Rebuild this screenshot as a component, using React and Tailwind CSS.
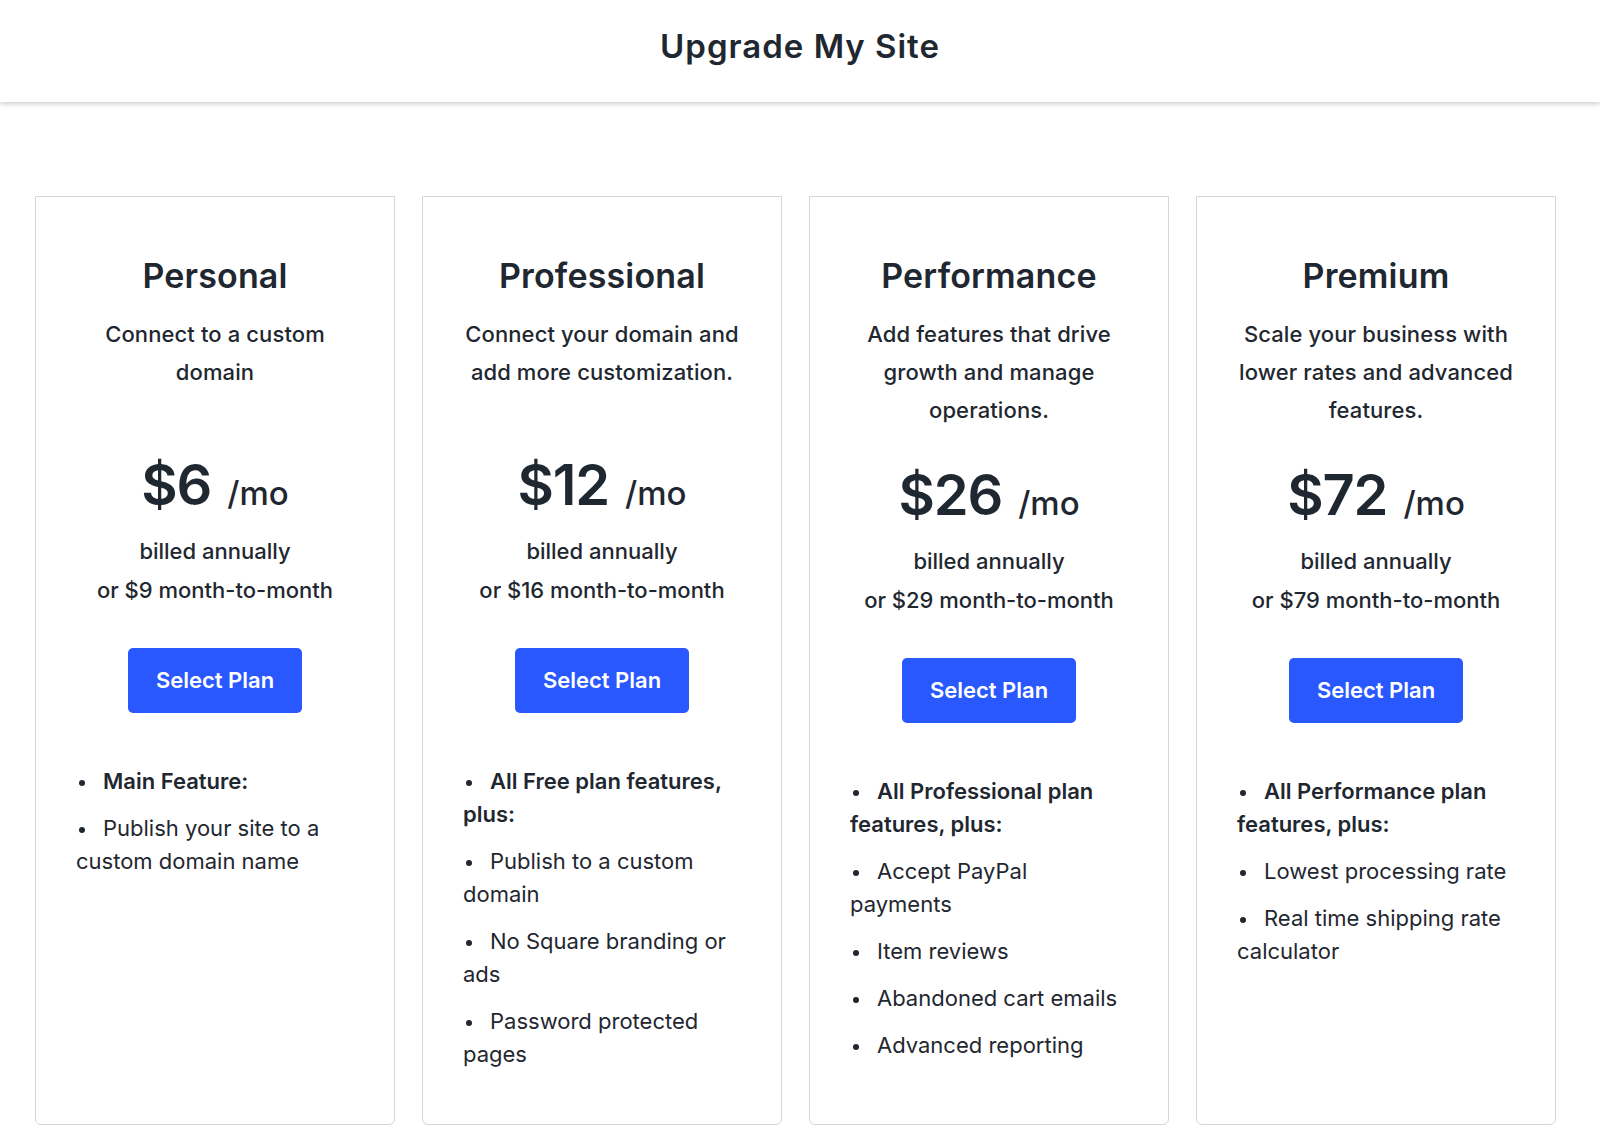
import React from "react";

const plans = [
    {
        name: "Personal",
        desc: ["Connect to a custom", "domain"],
        price: "$6",
        monthly: "$9",
        features: [
            {bold: true, lines: ["Main Feature:"]},
            {lines: ["Publish your site to a", "custom domain name"]},
        ],
    },
    {
        name: "Professional",
        desc: ["Connect your domain and", "add more customization."],
        price: "$12",
        monthly: "$16",
        features: [
            {bold: true, lines: ["All Free plan features,", "plus:"]},
            {lines: ["Publish to a custom", "domain"]},
            {lines: ["No Square branding or", "ads"]},
            {lines: ["Password protected", "pages"]},
        ],
    },
    {
        name: "Performance",
        desc: ["Add features that drive", "growth and manage", "operations."],
        price: "$26",
        monthly: "$29",
        features: [
            {bold: true, lines: ["All Professional plan", "features, plus:"]},
            {lines: ["Accept PayPal", "payments"]},
            {lines: ["Item reviews"]},
            {lines: ["Abandoned cart emails"]},
            {lines: ["Advanced reporting"]},
        ],
    },
    {
        name: "Premium",
        desc: ["Scale your business with", "lower rates and advanced", "features."],
        price: "$72",
        monthly: "$79",
        features: [
            {bold: true, lines: ["All Performance plan", "features, plus:"]},
            {lines: ["Lowest processing rate"]},
            {lines: ["Real time shipping rate", "calculator"]},
        ],
    },
];

function Feature({feature}) {
    return (
        <li className={feature.bold ? "font-semibold" : "font-normal"}>
            {feature.lines.map((line, i) => (
                <div key={i} className="whitespace-nowrap">
                    {i === 0 && (
                        <span className="inline-block w-[27px] align-middle">
                            <span className="block ml-[3px] h-[6px] w-[6px] rounded-full bg-[#1f2730]"/>
                        </span>
                    )}
                    {line}
                </div>
            ))}
        </li>
    );
}

function PlanCard({plan}) {
    return (
        <div className="w-[360px] shrink-0 border border-[#d3d7dc] rounded-b-[6px] bg-white flex flex-col items-center pt-[58px]">
            <h2 className="text-[34px] leading-[41px] font-semibold tracking-[0.005em]">{plan.name}</h2>
            <p className="mt-[19px] min-h-[104px] text-[22px] leading-[38px] font-medium tracking-[0.005em] text-center">
                {plan.desc.map((line, i) => (
                    <span key={i} className="block whitespace-nowrap">{line}</span>
                ))}
            </p>
            <div className="mt-[38px] flex items-baseline justify-center">
                <span className="text-[56px] leading-[56px] font-semibold tracking-[-0.02em]">{plan.price}</span>
                <span className="ml-[16px] text-[33px] leading-[34px] font-medium">/mo</span>
            </div>
            <div className="mt-[19px] text-[22px] leading-[39px] font-medium text-center">
                <div>billed annually</div>
                <div>or {plan.monthly} month-to-month</div>
            </div>
            <button className="mt-[38px] h-[65px] w-[174px] rounded-[5px] bg-[#2958ff] text-white text-[22px] font-semibold">
                Select Plan
            </button>
            <ul className="mt-[52px] self-stretch pl-[40px] pr-[30px] text-[22px] leading-[33px] flex flex-col gap-[14px]">
                {plan.features.map((f, i) => (
                    <Feature key={i} feature={f}/>
                ))}
            </ul>
        </div>
    );
}

export default function App() {
    return (
        <div className="min-h-[1147px] bg-white text-[#1f2730]" style={{fontFamily: "Inter, 'Noto Sans', sans-serif"}}>
            <header className="h-[102px] flex items-center justify-center pb-[8px] bg-white shadow-[0_2px_5px_rgba(0,0,0,0.2)] relative">
                <h1 className="text-[33px] font-semibold tracking-[0.03em]">Upgrade My Site</h1>
            </header>
            <main className="pt-[94px] pl-[35px] flex gap-[27px] items-stretch">
                {plans.map((plan) => (
                    <div key={plan.name} className="flex h-[929px]">
                        <PlanCard plan={plan}/>
                    </div>
                ))}
            </main>
        </div>
    );
}
